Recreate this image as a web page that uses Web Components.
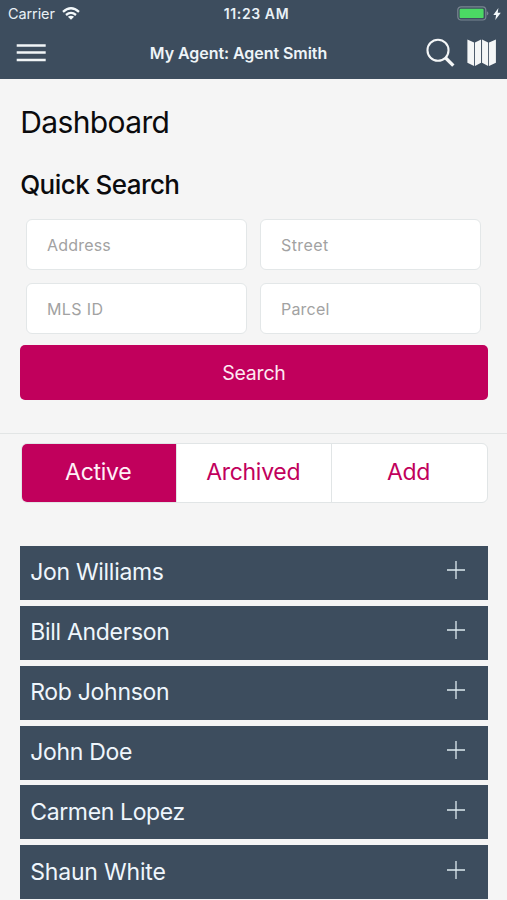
<!DOCTYPE html>
<html lang="en">
<head>
<meta charset="utf-8">
<title>My Agent</title>
<style>
html,body{margin:0;height:900px;overflow:hidden;background:#f5f5f5}
body{font-family:Inter,"Liberation Sans",sans-serif;color:#0b0b0d}
</style>
</head>
<body>
<agent-app></agent-app>
<script>
const define = (name, html) => customElements.define(name, class extends HTMLElement {
  constructor() {
    super();
    this.attachShadow({ mode: 'open' }).innerHTML = html;
  }
});

define('status-bar', `
<style>
:host{display:grid;grid-template-columns:1fr auto 1fr;align-items:center;height:27px;padding:0 6px 0 8px;font-size:14px;line-height:27px;color:#e9f1f6}
.l,.r{display:flex;align-items:center}
.l{gap:7px}.r{justify-content:flex-end;gap:4px}
.carrier{font-size:14.5px;letter-spacing:-.1px}
.time{font-weight:600;font-size:14px;letter-spacing:.6px;margin-left:4px}
svg{display:block}
</style>
<div class="l"><span class="carrier">Carrier</span>
<svg width="18" height="13" viewBox="0 0 18 13" fill="none" stroke="#f4f9fb" stroke-width="2.3"><path d="M1 4.8Q9-2.2 17 4.8"/><path d="M4 8Q9 3.8 14 8"/><path d="M9 12.7 5.9 9.8Q9 7.6 12.1 9.8Z" fill="#f4f9fb" stroke="none"/></svg></div>
<span class="time">11:23 AM</span>
<div class="r">
<svg width="32" height="15" viewBox="0 0 32 15"><rect x=".8" y=".8" width="28" height="13.2" rx="3.2" fill="none" stroke="#798691" stroke-width="1.2"/><rect x="2.6" y="2.7" width="24" height="9.4" rx="1.2" fill="#4bd964"/><path d="M29.8 5.2q1.6.6 1.6 2.2t-1.6 2.2z" fill="#798691"/></svg>
<svg width="8" height="12" viewBox="0 0 8 12"><path d="M5.4 0 .3 6.9h2.8L2.3 12 7.8 4.8H4.7z" fill="#f4f9fb"/></svg>
</div>`);

define('nav-bar', `
<style>
:host{display:grid;grid-template-columns:70px 1fr 70px;align-items:center;height:52px;padding:0 11px 0 16px;color:#eef4f8}
.title{font-size:16px;font-weight:600;line-height:51px;letter-spacing:-.06px;text-align:center;padding-right:41px;margin-left:6px;white-space:nowrap}
.r{display:flex;justify-content:flex-end;gap:11px}
svg{display:block}
</style>
<svg width="31" height="20" viewBox="0 0 31 20" stroke="#f1f5f7" stroke-width="2.5"><path d="M.7 2.4h29M.7 9.6h29M.7 16.9h29"/></svg>
<span class="title"><slot></slot></span>
<div class="r">
<svg width="30" height="30" viewBox="0 0 30 30" fill="none" stroke="#f4f6f7"><circle cx="12.2" cy="12.2" r="10.7" stroke-width="2.1"/><path d="m19.8 19.8 8 8" stroke-width="3.4" stroke-linecap="butt"/></svg>
<svg width="30" height="30" viewBox="0 0 30 30" fill="#f4f6f7"><path d="M.4 1.2 7.2 4.3V28.2L.4 25zM14.3 1.2 8.1 4.3V28.2l6.2-3.2zM15.3 1.2l6.2 3.1v23.9l-6.2-3.2zM29.4 1.2l-7 3.1v23.9l7-3.2z"/></svg>
</div>`);

define('search-field', `
<style>
:host{display:flex;align-items:center;box-sizing:border-box;height:51px;border:1.5px solid #e3e7e8;border-radius:6px;background:#fff;padding:1px 19.5px 0;font-size:16px;color:#a2a2a2;letter-spacing:var(--ls,.2px)}
</style><slot></slot>`);

define('primary-button', `
<style>
:host{display:flex;align-items:center;justify-content:center;height:54.5px;border-radius:5px;background:#c1005c;color:#fde9f2;font-size:19.5px;letter-spacing:-.2px}
span{padding-top:1px}
</style><span><slot></slot></span>`);

define('quick-search', `
<style>
:host{display:block}
h2{margin:0;font-size:26px;font-weight:500;line-height:32px;letter-spacing:-.56px}
.grid{display:grid;grid-template-columns:221px 221px;gap:13px;padding:0 6.3px;margin-top:18.3px}
primary-button{margin-top:11.2px}
</style>
<h2>Quick Search</h2>
<div class="grid"><search-field>Address</search-field><search-field style="--ls:.4px">Street</search-field><search-field style="--ls:.4px">MLS ID</search-field><search-field>Parcel</search-field></div>
<primary-button>Search</primary-button>`);

define('segment-control', `
<style>
:host{display:grid;grid-template-columns:154px 155px 1fr;box-sizing:border-box;height:60px;margin-left:1px;border:1px solid #e1e5e6;border-radius:6px;background:#fff;overflow:hidden}
::slotted(*){display:flex;align-items:center;justify-content:center;color:#c1005c;font-size:23px;letter-spacing:-.3px;border-left:1px solid #e1e5e6;padding:0 2px 1px 0}
::slotted(:first-child){background:#c1005c;color:#fff0f7;border-left:0}
</style><slot></slot>`);

define('client-row', `
<style>
:host{display:flex;align-items:center;justify-content:space-between;box-sizing:border-box;height:54px;background:#3d4d5e;color:#eff6fc;padding:0 21.5px 0 10px;font-size:23px;letter-spacing:var(--ls,-.3px)}
span{margin-top:-1px}
svg{display:block;margin-top:-5px}
</style><span><slot></slot></span>
<svg width="20" height="20" viewBox="0 0 20 20" stroke="#dce9ee" stroke-width="1.3"><path d="M1 10h18M10 1v18"/></svg>`);

define('agent-app', `
<style>
:host{display:block;width:507px;height:900px;overflow:hidden}
header{background:#3d4d5e;height:79px}
main{padding:0 19.3px 0 20.2px}
h1{margin:0;padding-top:23px;font-size:30px;font-weight:400;line-height:40px;letter-spacing:-.62px}
quick-search{margin-top:27px}
hr{margin:33px -19.5px 0 -20.5px;border:0;height:1px;background:#e2e5e5}
segment-control{margin-top:9px}
.list{display:flex;flex-direction:column;gap:5.85px;margin-top:43px}
</style>
<header><status-bar></status-bar><nav-bar>My Agent: Agent Smith</nav-bar></header>
<main><h1>Dashboard</h1>
<quick-search></quick-search><hr>
<segment-control><span>Active</span><span>Archived</span><span>Add</span></segment-control>
<div class="list"><client-row>Jon Williams</client-row><client-row>Bill Anderson</client-row><client-row>Rob Johnson</client-row><client-row>John Doe</client-row><client-row style="--ls:-.36px">Carmen Lopez</client-row><client-row style="--ls:-.18px">Shaun White</client-row></div>
</main>`);
</script>
</body>
</html>
